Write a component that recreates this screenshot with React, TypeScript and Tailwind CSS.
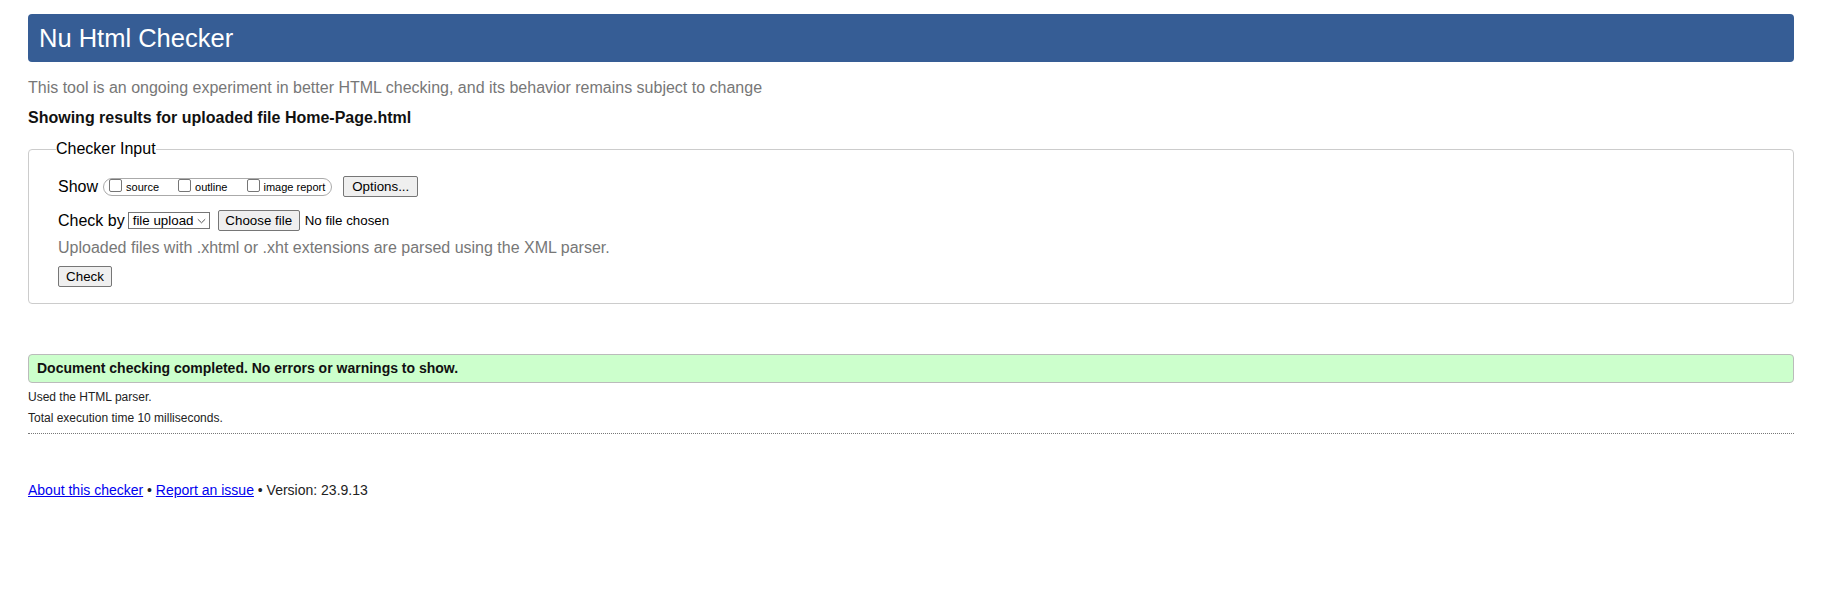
import React from 'react';

const FONT = { fontFamily: '"Liberation Sans", Arial, Helvetica, sans-serif' };

function Checkbox({ className = '' }: { className?: string }) {
    return <span className={`block h-[13px] w-[13px] shrink-0 self-start rounded-[2px] border border-[#767676] bg-white ${className}`} />;
}

function NativeButton({ label, width }: { label: string; width: string }) {
    return (
        <button
            type="button"
            className={`flex h-[21px] ${width} shrink-0 items-center justify-center rounded-[2px] border border-[#767676] bg-[#efefef] text-[13.33px] leading-none text-black`}
        >
            {label}
        </button>
    );
}

export default function App() {
    return (
        <div style={FONT} className="min-h-[590px] bg-white pl-[28px] pr-[37px] text-black">
            {/* Title bar */}
            <h1 className="mt-[14px] flex h-[48px] items-center rounded-[4px] bg-[#365d95] pl-[11px] text-[25.5px] font-normal text-white">
                Nu Html Checker
            </h1>

            <p className="mt-[17px] h-[18px] text-[16px] leading-[18px] text-[#777]">
                This tool is an ongoing experiment in better HTML checking, and its behavior remains subject to change
            </p>

            <p className="mt-[12px] h-[18px] text-[16px] font-bold leading-[18px] text-[#111]">
                Showing results for uploaded file Home-Page.html
            </p>

            {/* Checker input form */}
            <fieldset className="mt-[13px] rounded-[4px] border border-[#ccc] pb-[16px] pl-[29px] pr-[10px]">
                <legend className="-ml-[2px] px-0 text-[16px] leading-[18px]">Checker Input</legend>

                <div className="mt-[18px] flex h-[21px] items-center">
                    <span className="text-[16px] leading-[18px]">Show</span>
                    <div className="ml-[5px] mt-[2px] flex h-[18px] items-end self-start rounded-full border border-[#aaa] pl-[5px] pr-[6px] text-[11px] leading-[13px]">
                        <Checkbox />
                        <span className="mb-[1px] ml-[4px]">source</span>
                        <Checkbox className="ml-[19px]" />
                        <span className="mb-[1px] ml-[4px]">outline</span>
                        <Checkbox className="ml-[20px]" />
                        <span className="mb-[1px] ml-[3px]">image report</span>
                    </div>
                    <div className="ml-[11px]">
                        <NativeButton label="Options..." width="w-[75px]" />
                    </div>
                </div>

                <div className="mt-[13px] flex h-[21px] items-center">
                    <span className="text-[16px] leading-[18px]">Check by</span>
                    <div className="ml-[3px] flex h-[17px] w-[82px] items-center border border-[#767676] bg-white pl-[4px] text-[13.33px] leading-none">
                        file upload
                        <svg className="ml-auto mr-[3px]" width="9" height="6" viewBox="0 0 9 6">
                            <path d="M0.8 1.2 L4.5 4.8 L8.2 1.2" stroke="#555" strokeWidth="1" fill="none" />
                        </svg>
                    </div>
                    <div className="ml-[8px]">
                        <NativeButton label="Choose file" width="w-[82px]" />
                    </div>
                    <span className="ml-[5px] text-[13.33px]">No file chosen</span>
                </div>

                <p className="mt-[8px] h-[18px] text-[16px] leading-[18px] text-[#777]">
                    Uploaded files with .xhtml or .xht extensions are parsed using the XML parser.
                </p>

                <div className="mt-[9px] flex">
                    <NativeButton label="Check" width="w-[54px]" />
                </div>
            </fieldset>

            {/* Result */}
            <div className="mt-[50px] flex h-[29px] items-center rounded-[4px] border border-[#bbb] bg-[#ccffcc] pl-[8px] text-[14px] font-bold text-[#111]">
                Document checking completed. No errors or warnings to show.
            </div>

            <p className="mt-[7px] h-[14px] text-[12px] leading-[14px] text-[#222]">Used the HTML parser.</p>
            <p className="mt-[7px] h-[14px] text-[12px] leading-[14px] text-[#222]">Total execution time 10 milliseconds.</p>

            <div className="mt-[8px] border-b border-dotted border-[#777]" />

            <p className="mt-[48px] text-[14px] leading-[16px] text-[#222]">
                <a href="#" className="text-[#0000ee] underline">About this checker</a>
                {' • '}
                <a href="#" className="text-[#0000ee] underline">Report an issue</a>
                {' • Version: 23.9.13'}
            </p>
        </div>
    );
}
